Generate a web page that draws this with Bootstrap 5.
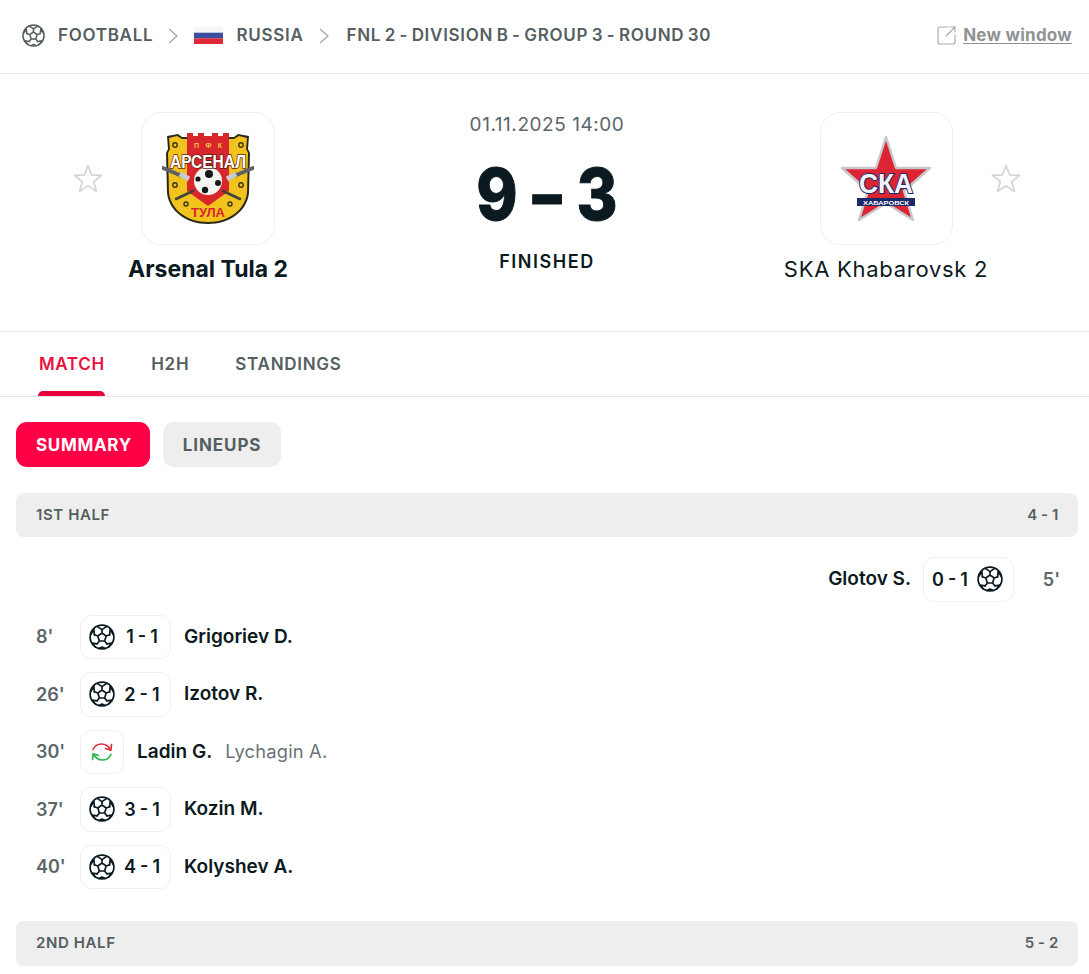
<!DOCTYPE html>
<html lang="en">
<head>
<meta charset="UTF-8" />
<meta name="viewport" content="width=device-width, initial-scale=1.0" />
<title>Arsenal Tula 2 - SKA Khabarovsk 2</title>
<link rel="stylesheet" href="https://cdn.jsdelivr.net/npm/bootstrap@5.3.0/dist/css/bootstrap.min.css" />
<style>
  body { font-family: Inter, "Liberation Sans", sans-serif; color: #0b1a21; background: #fff; overflow: hidden; }
  .crumbs { height: 74px; padding: 0 17px 2px 22px; border-bottom: 1px solid #e9e9e9; }
  .crumb { font-size: 17px; font-weight: 600; letter-spacing: .72px; word-spacing: -1.7px; color: #555e61; }
  .crumb-last { margin-left: 2px; word-spacing: -1.5px; }
  .crumb-ball { width: 23px; height: 23px; margin-right: 13px; color: #555e61; }
  .crumb-sep { width: 10px; height: 16px; margin: 0 16px 0 15px; }
  .crumb-flag { margin-right: 13px; }
  .new-win { font-size: 17px; font-weight: 700; letter-spacing: .25px; color: #8f9292; text-decoration: underline; text-underline-offset: 2px; gap: 7px; }
  .match-head { height: 258px; padding: 38px 23px 0 28px; border-bottom: 1px solid #e9e9e9; }
  .team-col { width: 360px; }
  .mid-col { width: 260px; }
  .logo-box { width: 134px; height: 133px; border: 1px solid #efefef; border-radius: 20px; }
  .logo-box-r { width: 133px; }
  .fav { width: 30px; height: 30px; }
  .team-name { font-size: 23px; line-height: 28px; margin-top: 10px; letter-spacing: 0; }
  .team-win { font-weight: 700; }
  .team-lose { font-size: 22px; font-weight: 400; letter-spacing: .72px; }
  .m-date { font-size: 19px; line-height: 24px; color: #5c6568; letter-spacing: .55px; margin-top: 1px; }
  .m-score { height: 60px; font-size: 71px; line-height: 60px; font-weight: 800; margin-top: 27px; -webkit-text-stroke: 1px #0b1a21; }
  .score-cell { width: 50px; display: inline-block; transform: scaleX(.88); }
  .score-dash { transform: scaleX(1.2); }
  .m-state { font-size: 18px; line-height: 24px; font-weight: 600; letter-spacing: 1.55px; margin-top: 26px; }
  .tabs-bar { height: 65px; padding-left: 38px; gap: 46px; border-bottom: 1px solid #e4e4e4; }
  .tab-item { font-size: 17px; font-weight: 600; letter-spacing: .72px; color: #555e61; line-height: 64px; height: 64px; position: relative; }
  .tab-on { color: #e8113f; padding: 0 .5px 0 1px; letter-spacing: .65px; }
  .tab-on::after { content: ""; position: absolute; left: 0; right: 0; bottom: 0; height: 5px; background: #e8003f; border-radius: 5px 5px 0 0; }
  .subtabs { padding: 25px 0 0 16px; gap: 13px; }
  .sub-btn { height: 45px; padding: 2px 20px 0; border-radius: 11px; font-size: 17px; font-weight: 700; letter-spacing: .9px; background: #eee; color: #555e61; border: 0; }
  .sub-on { background: #ff0046; color: #fff; padding: 2px 18px 0 20px; letter-spacing: .68px; }
  .board { padding: 26px 11px 0 16px; }
  .half-bar { height: 44px; padding: 0 19px 0 20px; border-radius: 8px; background: #eee; font-size: 15px; font-weight: 600; letter-spacing: .6px; color: #555e61; }
  .half-score { word-spacing: -1px; }
  .half-gap { margin-top: 32px; height: 45px; }
  .ev-list { padding-top: 20px; gap: 13px; }
  .ev-row { height: 44.5px; padding: 0 18px 0 20px; }
  .ev-min { width: 44px; font-size: 18px; font-weight: 600; color: #5c6568; }
  .ev-chip { width: 91px; height: 44.5px; padding: 0 8px; gap: 9px; border: 1px solid #efefef; border-radius: 11px; font-size: 18px; font-weight: 600; word-spacing: -.5px; }
  .chip-sub { padding: 0; width: 44px; }
  .chip-score { width: 36px; text-align: center; white-space: nowrap; }
  .ev-ball { width: 26px; height: 26px; }
  .ev-player { font-size: 19px; font-weight: 600; margin-left: 13px; }
  .ev-player-r { margin: 0 12px 0 0; }
  .ev-off { font-size: 18.3px; color: #6a7275; margin-left: 13px; letter-spacing: .2px; }
  .min-r { width: 46px; text-align: right; }
</style>
</head>
<body>
<svg width="0" height="0" class="d-block" style="position:absolute">
  <defs>
    <symbol id="ball" viewBox="0 0 26 26">
      <g fill="none" stroke="currentColor" stroke-width="1.700" stroke-linejoin="round" stroke-linecap="round">
        <circle cx="13" cy="13" r="11.900" />
        <path d="M13 9l4.200 3-1.600 5h-5.200l-1.600-5zM13 9V5.600M17.200 12l3.400-1.200M15.600 17l2.200 2.800M10.400 17l-2.200 2.800M8.800 12l-3.400-1.200" />
        <path d="M8.200 2.400L13 5.600l4.800-3.200M20.600 10.800l.6-5.600 3 5.500M17.800 19.800l5.300-.8-3.500 4M8.200 19.800l-5.300-.8 3.500 4M5.400 10.800l-.6-5.600-3 5.500M10 24.500l3-1.500 3 1.500" />
      </g>
    </symbol>
    <symbol id="star" viewBox="0 1 30 30">
      <path d="M15 2.500l3.600 9.300 9.900.6-7.700 6.300 2.600 9.600-8.400-5.400-8.400 5.400 2.600-9.600-7.700-6.300 9.900-.6z" fill="none" stroke="#d3d5d5" stroke-width="1.700" stroke-linejoin="round" />
    </symbol>
    <symbol id="chev" viewBox="0 0 10 16">
      <path d="M1 1l8 7-8 7" fill="none" stroke="#a3a6a6" stroke-width="1.300" />
    </symbol>
  </defs>
</svg>

<div class="crumbs d-flex align-items-center">
  <svg class="crumb-ball"><use href="#ball" /></svg>
  <span class="crumb">FOOTBALL</span>
  <svg class="crumb-sep"><use href="#chev" /></svg>
  <svg width="29" height="17" viewBox="0 0 29 17" class="crumb-flag">
    <rect width="29" height="5.700" fill="#f6f6f8" /><rect y="5.700" width="29" height="5.700" fill="#3a4fa0" /><rect y="11.300" width="29" height="5.700" fill="#e0283a" />
  </svg>
  <span class="crumb">RUSSIA</span>
  <svg class="crumb-sep"><use href="#chev" /></svg>
  <span class="crumb crumb-last">FNL 2 - DIVISION B - GROUP 3 - ROUND 30</span>
  <a class="ms-auto d-flex align-items-center new-win" href="#">
    <svg width="19" height="19" viewBox="0 0 19 19" fill="none" stroke="#a9abab" stroke-width="1.200" stroke-linecap="round">
      <path d="M11 1H3a2 2 0 0 0-2 2v13a2 2 0 0 0 2 2h13a2 2 0 0 0 2-2V9" />
      <path d="M9 10l9-9M13 1h5v5" />
    </svg>
    <span>New window</span>
  </a>
</div>

<div class="match-head d-flex justify-content-between">
  <div class="team-col text-center">
    <div class="d-flex justify-content-center align-items-center" style="gap:38px">
      <svg class="fav"><use href="#star" /></svg>
      <div class="logo-box d-flex align-items-center justify-content-center">
        <svg width="92" height="93" viewBox="0 0 92 93">
          <path d="M5 4l11-2 4 3h52l4-3 11 2-1 13 2 4-1 40c-2 18-19 31-41 31S7 79 5 61L4 21l2-4z" fill="#2b2a17" />
          <path d="M7 6l8-2 5 3h52l5-3 8 2-1 11 2 4-1 40c-2 16-17 29-39 29S9 77 7 61L6 21l2-4z" fill="#f2c31e" />
          <path d="M25 1h6v3h5V1h6v3h8V1h6v3h5V1h6v58l-21 15-21-15z" fill="#d8262c" />
          <g fill="none" stroke="#3a3416" stroke-width="1.400"><circle cx="13" cy="13" r="2.200" /><circle cx="79" cy="13" r="2.200" /><circle cx="13" cy="53" r="2.200" /><circle cx="79" cy="53" r="2.200" /><circle cx="24" cy="72" r="2" /><circle cx="68" cy="72" r="2" /></g>
          <path d="M1 36l19 8M91 36l-19 8" stroke="#5e6166" stroke-width="4" stroke-linecap="round" />
          <path d="M18 42l9 5M74 42l-9 5" stroke="#c9cbce" stroke-width="5" />
          <path d="M14 67l17-8M78 67l-17-8" stroke="#43433a" stroke-width="2.500" stroke-linecap="round" />
          <circle cx="46" cy="49" r="14" fill="#f4f4f2" />
          <g fill="#15181a"><circle cx="47" cy="42" r="4" /><circle cx="36" cy="47" r="2.600" /><circle cx="56" cy="51" r="3" /><circle cx="43" cy="58" r="3.200" /></g>
          <text transform="translate(46 36) scale(1 1.200)" text-anchor="middle" font-family="Liberation Sans, sans-serif" font-weight="700" font-size="15.500" fill="#fff" stroke="#5d1f15" stroke-width="1.400" paint-order="stroke">АРСЕНАЛ</text>
          <text x="46" y="85" text-anchor="middle" font-family="Liberation Sans, sans-serif" font-weight="700" font-size="12" textLength="34" lengthAdjust="spacingAndGlyphs" fill="#d8262c">ТУЛА</text>
          <text x="46" y="16" text-anchor="middle" font-family="Liberation Sans, sans-serif" font-weight="700" font-size="7" textLength="28" fill="#f4c542">ПФК</text>
        </svg>
      </div>
      <div class="fav"></div>
    </div>
    <div class="team-name team-win">Arsenal Tula 2</div>
  </div>

  <div class="mid-col text-center">
    <div class="m-date">01.11.2025 14:00</div>
    <div class="m-score d-flex justify-content-center"><span class="score-cell">9</span><span class="score-cell score-dash">-</span><span class="score-cell">3</span></div>
    <div class="m-state">FINISHED</div>
  </div>

  <div class="team-col text-center">
    <div class="d-flex justify-content-center align-items-center" style="gap:38px">
      <div class="fav"></div>
      <div class="logo-box logo-box-r d-flex align-items-center justify-content-center">
        <svg width="93" height="88" viewBox="0 0 93 88">
          <path d="M46 2l10 31h34L64 56l9 29-27-17-27 17 9-29L2 33h34z" fill="#dc2433" stroke="#c5c8cc" stroke-width="2.400" stroke-linejoin="round" />
          <rect x="17" y="63" width="58" height="8" fill="#1d2a69" />
          <text x="46" y="58" text-anchor="middle" font-family="Liberation Sans, sans-serif" font-weight="700" font-size="27" textLength="54" lengthAdjust="spacingAndGlyphs" fill="#f3f4f7" stroke="#1d2a69" stroke-width="2" paint-order="stroke">СКА</text>
          <text x="46" y="69.500" text-anchor="middle" font-family="Liberation Sans, sans-serif" font-weight="700" font-size="5.500" textLength="46" lengthAdjust="spacingAndGlyphs" fill="#fff">ХАБАРОВСК</text>
        </svg>
      </div>
      <svg class="fav"><use href="#star" /></svg>
    </div>
    <div class="team-name team-lose">SKA Khabarovsk 2</div>
  </div>
</div>

<div class="tabs-bar d-flex">
  <div class="tab-item tab-on">MATCH</div>
  <div class="tab-item">H2H</div>
  <div class="tab-item">STANDINGS</div>
</div>

<div class="subtabs d-flex">
  <button class="sub-btn sub-on">SUMMARY</button>
  <button class="sub-btn">LINEUPS</button>
</div>

<div class="board">
  <div class="half-bar d-flex align-items-center justify-content-between"><span>1ST HALF</span><span class="half-score">4 - 1</span></div>
  <div class="ev-list d-flex flex-column">
    <div class="ev-row d-flex align-items-center justify-content-end">
      <span class="ev-player ev-player-r">Glotov S.</span>
      <div class="ev-chip d-flex align-items-center"><span class="chip-score">0 - 1</span><svg class="ev-ball"><use href="#ball" /></svg></div>
      <span class="ev-min min-r">5'</span>
    </div>
    <div class="ev-row d-flex align-items-center">
      <span class="ev-min">8'</span>
      <div class="ev-chip d-flex align-items-center"><svg class="ev-ball"><use href="#ball" /></svg><span class="chip-score">1 - 1</span></div>
      <span class="ev-player">Grigoriev D.</span>
    </div>
    <div class="ev-row d-flex align-items-center">
      <span class="ev-min">26'</span>
      <div class="ev-chip d-flex align-items-center"><svg class="ev-ball"><use href="#ball" /></svg><span class="chip-score">2 - 1</span></div>
      <span class="ev-player">Izotov R.</span>
    </div>
    <div class="ev-row d-flex align-items-center">
      <span class="ev-min">30'</span>
      <div class="ev-chip chip-sub d-flex align-items-center justify-content-center">
        <svg width="26" height="26" viewBox="0 0 26 26" fill="none" stroke-width="1.700" stroke-linecap="round" stroke-linejoin="round">
          <path d="M4 10.500c1.800-4 5-5.500 8.500-5.500 4 0 7 2 9 6" stroke="#d9303a" />
          <path d="M22.500 5.500l-.7 5.800-5.300-1.800" stroke="#d9303a" />
          <path d="M22 15.500c-1.800 4-5 5.500-8.500 5.500-4 0-7-2-9-6" stroke="#2fb551" />
          <path d="M3.500 20.500l.7-5.800 5.300 1.800" stroke="#2fb551" />
        </svg>
      </div>
      <span class="ev-player">Ladin G.</span>
      <span class="ev-off">Lychagin A.</span>
    </div>
    <div class="ev-row d-flex align-items-center">
      <span class="ev-min">37'</span>
      <div class="ev-chip d-flex align-items-center"><svg class="ev-ball"><use href="#ball" /></svg><span class="chip-score">3 - 1</span></div>
      <span class="ev-player">Kozin M.</span>
    </div>
    <div class="ev-row d-flex align-items-center">
      <span class="ev-min">40'</span>
      <div class="ev-chip d-flex align-items-center"><svg class="ev-ball"><use href="#ball" /></svg><span class="chip-score">4 - 1</span></div>
      <span class="ev-player">Kolyshev A.</span>
    </div>
  </div>
  <div class="half-bar half-gap d-flex align-items-center justify-content-between"><span>2ND HALF</span><span class="half-score">5 - 2</span></div>
</div>

<script src="https://cdn.jsdelivr.net/npm/bootstrap@5.3.0/dist/js/bootstrap.bundle.min.js"></script>
</body>
</html>
